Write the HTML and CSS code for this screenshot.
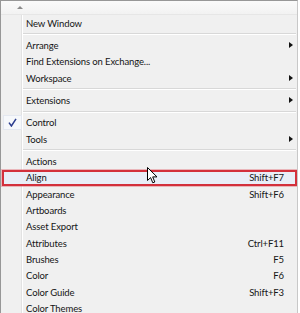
FILE: index.html
```html
<!DOCTYPE html>
<html lang="en">
<head>
    <meta charset="UTF-8">
    <meta name="viewport" content="width=device-width, initial-scale=1.0">
    <title>Window menu</title>
    <link rel="stylesheet" href="styles.css">
</head>
<body>
    <div class="menu">
        <div class="scroll-up"><span class="up-arrow"></span></div>
        <ul class="items">
            <li class="item"><span class="label">New Window</span></li>
            <li class="sep"></li>
            <li class="item sub"><span class="label">Arrange</span></li>
            <li class="item"><span class="label">Find Extensions on Exchange...</span></li>
            <li class="item sub"><span class="label">Workspace</span></li>
            <li class="sep"></li>
            <li class="item sub"><span class="label">Extensions</span></li>
            <li class="sep"></li>
            <li class="item checked"><span class="check">
                <svg width="9" height="9" viewBox="0 0 9 9"><path d="M1 4.6 L3.4 8 L8 0.8" fill="none" stroke="#2b3d8f" stroke-width="1.5"/></svg>
            </span><span class="label">Control</span></li>
            <li class="item sub"><span class="label">Tools</span></li>
            <li class="sep"></li>
            <li class="item"><span class="label">Actions</span></li>
            <li class="item hot"><span class="label">Align</span><span class="key">Shift+F7</span></li>
            <li class="item"><span class="label">Appearance</span><span class="key">Shift+F6</span></li>
            <li class="item"><span class="label">Artboards</span></li>
            <li class="item"><span class="label">Asset Export</span></li>
            <li class="item"><span class="label">Attributes</span><span class="key">Ctrl+F11</span></li>
            <li class="item"><span class="label">Brushes</span><span class="key">F5</span></li>
            <li class="item"><span class="label">Color</span><span class="key">F6</span></li>
            <li class="item"><span class="label">Color Guide</span><span class="key">Shift+F3</span></li>
            <li class="item"><span class="label">Color Themes</span></li>
        </ul>
        <!-- mouse pointer over the Align row -->
        <svg class="pointer" width="11" height="17" viewBox="0 0 11 17">
            <path d="M0.5 0.5 L0.5 13.5 L3.6 10.6 L5.8 15.8 L7.8 15 L5.7 9.9 L10 9.9 Z" fill="#fff" stroke="#000" stroke-width="1"/>
        </svg>
    </div>
</body>
</html>
```

FILE: styles.css
```css
body {
    margin: 0;
    padding: 0;
    background: #fff;
    font-family: Lato, "Open Sans", sans-serif;
}
.menu {
    position: relative;
    width: 298px;
    height: 313px;
    box-sizing: border-box;
    background: #f0f0f0;
    border-left: 1px solid #979797;
    border-top: 1px solid #979797;
    border-right: 1px solid #c8c8c8;
    overflow: hidden;
}
.scroll-up {
    height: 13px;
    background: linear-gradient(#fafafa, #f2f2f2);
    border-bottom: 1px solid #e6e6e6;
    position: relative;
}
.up-arrow {
    position: absolute;
    left: 16px;
    top: 5px;
    width: 0;
    height: 0;
    border-left: 3px solid transparent;
    border-right: 3px solid transparent;
    border-bottom: 3px solid #8a8a8a;
}
.items {
    list-style: none;
    margin: 0;
    padding: 0;
    background: linear-gradient(to right, transparent 20px, #e2e2e2 20px, #e2e2e2 21px, #fff 21px, #fff 22px, transparent 22px);
}
.item {
    display: grid;
    grid-template-columns: 21px 1fr auto 13px;
    align-items: center;
    height: 16.33px;
    box-sizing: border-box;
    font-size: 9.5px;
    letter-spacing: -0.12px;
    color: #151515;
    position: relative;
}
.label {
    grid-column: 2;
    padding-left: 4px;
    white-space: nowrap;
}
.key {
    grid-column: 3;
    text-align: right;
}
.sub::after {
    content: "";
    grid-column: 4;
    justify-self: center;
    width: 0;
    height: 0;
    border-top: 3px solid transparent;
    border-bottom: 3px solid transparent;
    border-left: 4px solid #111;
}
.check {
    grid-column: 1;
    display: flex;
    align-items: center;
    justify-content: center;
    height: 15px;
    margin-left: 2px;
    background: #f6f8fb;
    border: 1px solid #e4e8f0;
    box-sizing: border-box;
}
.hot {
    margin: 0 0 0 1px;
    border: 2px solid #d3303c;
    box-shadow: 0 0 0 1px rgba(225, 110, 120, 0.45);
    background: #e9eef7;
    grid-template-columns: 18px 1fr auto 11px;
}
.sep {
    height: 6px;
    background: linear-gradient(transparent 2px, #d8d8d8 2px, #d8d8d8 3px, #fff 3px, #fff 4px, transparent 4px) no-repeat 22px 0 / calc(100% - 23px) 100%;
}
.pointer {
    position: absolute;
    left: 146px;
    top: 166px;
}
```
